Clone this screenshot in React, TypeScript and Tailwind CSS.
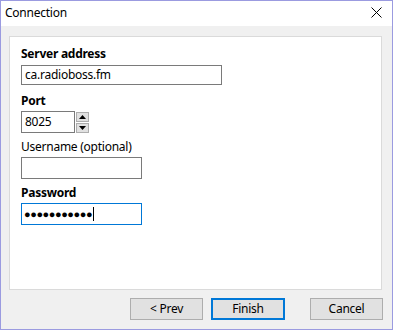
import React from 'react';

const font = { fontFamily: '"Noto Sans", "Open Sans", sans-serif' };

const Spinner: React.FC = () => (
  <div className="ml-[1px] flex flex-col gap-[1px] pt-[1px]">
    {/* up */}
    <div className="flex h-[10px] w-[13px] items-center justify-center border border-[#adadad] bg-[#e1e1e1]">
      <svg width="7" height="4" viewBox="0 0 7 4">
        <polygon points="3.5,0 7,4 0,4" fill="#000" />
      </svg>
    </div>
    {/* down */}
    <div className="flex h-[10px] w-[13px] items-center justify-center border border-[#adadad] bg-[#e1e1e1]">
      <svg width="7" height="4" viewBox="0 0 7 4">
        <polygon points="0,0 7,0 3.5,4" fill="#000" />
      </svg>
    </div>
  </div>
);

const dots = Array.from({ length: 11 });

const App: React.FC = () => {
  return (
    <div
      className="flex h-[330px] w-[393px] flex-col border border-[#9b9be0] bg-[#f0f0f0] text-[12px] tracking-[-0.25px] text-black"
      style={font}
    >
      {/* Title bar */}
      <div className="flex h-[25px] items-center justify-between bg-white pl-[4px] pr-[10px]">
        <span className="leading-[16px] -mt-[2px]">Connection</span>
        <svg width="11" height="11" viewBox="0 0 11 11" className="-mt-[2px]">
          <path d="M0.5 0.5 L10.5 10.5 M10.5 0.5 L0.5 10.5" stroke="#000" strokeWidth="1" />
        </svg>
      </div>

      {/* Panel */}
      <div className="ml-[8px] mt-[10px] h-[254px] w-[373px] border border-[#dadada] bg-white px-[11px] pt-[9px]">
        <div className="h-[16px] font-bold leading-[16px]">Server address</div>
        <div className="mt-[3px] flex h-[20px] w-[201px] items-center border border-[#7a7a7a] px-[3px] leading-[16px]">
          ca.radioboss.fm
        </div>

        <div className="mt-[8px] h-[16px] font-bold leading-[16px]">Port</div>
        <div className="mt-[2px] flex">
          <div className="flex h-[22px] w-[54px] items-center border border-[#7a7a7a] px-[3px] leading-[16px]">8025</div>
          <Spinner />
        </div>

        <div className="mt-[6px] h-[16px] leading-[16px]">Username (optional)</div>
        <div className="mt-[2px] h-[22px] w-[121px] border border-[#7a7a7a]" />

        <div className="mt-[6px] h-[16px] font-bold leading-[16px]">Password</div>
        <div className="mt-[2px] flex h-[22px] w-[121px] items-center border border-[#0078d7] pl-[2px]">
          {dots.map((_, i) => (
            <span key={i} className="w-[6.2px] text-center text-[11px] leading-[10px] tracking-normal">●</span>
          ))}
          <span className="ml-[1px] h-[14px] w-[1px] bg-black" />
        </div>
      </div>

      {/* Buttons */}
      <div className="mt-[8px] flex h-[22px] pl-[129px]">
        <button className="h-[22px] w-[73px] border border-[#adadad] bg-[#e1e1e1] leading-[16px]">&lt; Prev</button>
        <button className="ml-[8px] h-[22px] w-[74px] border-2 border-[#0078d7] bg-[#e1e1e1] leading-[16px]">Finish</button>
        <button className="ml-[25px] h-[22px] w-[73px] border border-[#adadad] bg-[#e1e1e1] leading-[16px]">Cancel</button>
      </div>
    </div>
  );
};

export default App;
